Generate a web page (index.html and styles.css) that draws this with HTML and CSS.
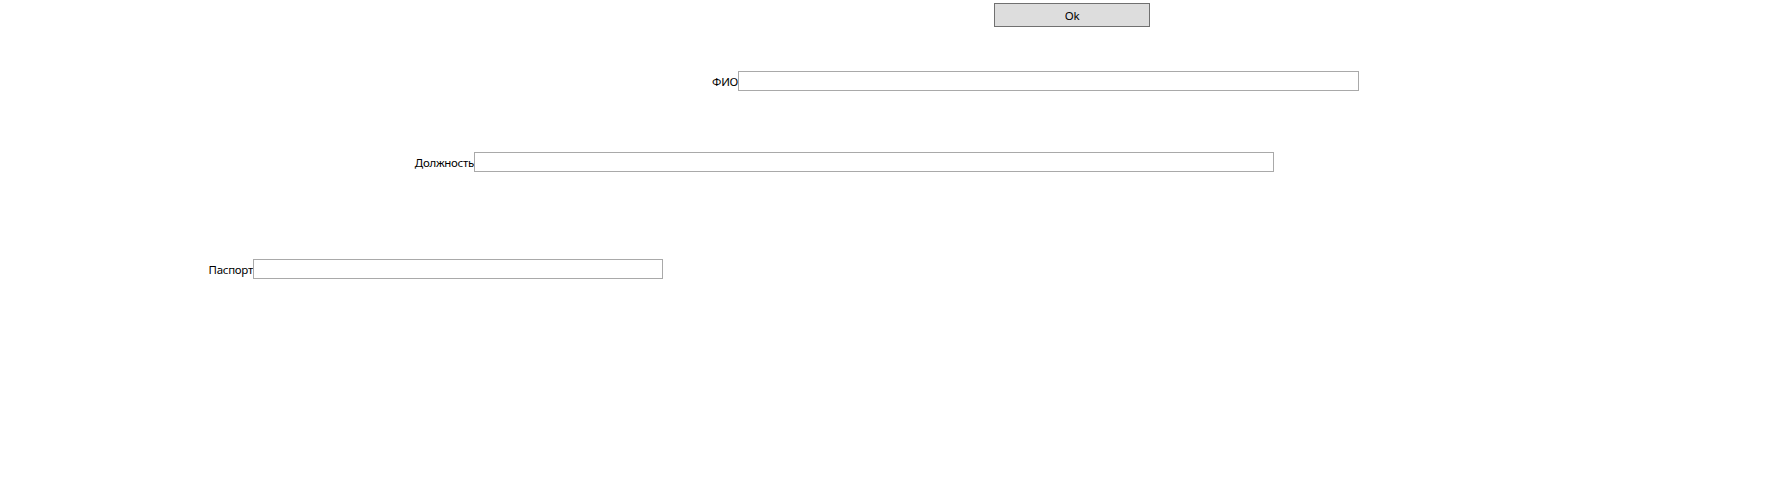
FILE: index.html
```html
<!DOCTYPE html>
<html>
<head>
<meta charset="utf-8">
<link rel="stylesheet" href="styles.css">
</head>
<body>
<div class="page">
  <div class="top"><button class="ok">Ok</button></div>
  <div class="row row-fio"><label class="lbl">ФИО</label><input class="field" type="text"></div>
  <div class="row row-pos"><label class="lbl">Должность</label><input class="field" type="text"></div>
  <div class="row row-pass"><label class="lbl">Паспорт</label><input class="field" type="text"></div>
</div>
</body>
</html>
```
FILE: styles.css
```css
html, body { margin: 0; padding: 0; background: #ffffff; }
body { font-family: "Noto Sans", "Open Sans", sans-serif; font-size: 11.5px; letter-spacing: -0.3px; color: #000; }
.page { width: 1780px; height: 496px; }
.top { padding-top: 3px; padding-left: 994px; height: 24px; }
.ok {
  box-sizing: border-box; width: 156px; height: 24px; margin: 0; padding: 1px 0 0;
  background: #dddddd; border: 1px solid #707070; font: inherit; letter-spacing: inherit; color: #000;
}
.row { display: flex; align-items: center; height: 20px; }
.lbl { display: block; text-align: right; white-space: nowrap; line-height: 18px; padding-top: 2px; box-sizing: border-box; height: 20px; }
.field {
  box-sizing: border-box; height: 20px; margin: 0; padding: 0 2px;
  border: 1px solid #a9a9a9; background: #fff; font: inherit; outline: none;
}
.row-fio { margin-top: 44px; }
.row-fio .lbl { width: 738px; }
.row-fio .field { width: 621px; }
.row-pos { margin-top: 61px; }
.row-pos .lbl { width: 474px; }
.row-pos .field { width: 800px; }
.row-pass { margin-top: 87px; }
.row-pass .lbl { width: 253px; }
.row-pass .field { width: 410px; }
```
